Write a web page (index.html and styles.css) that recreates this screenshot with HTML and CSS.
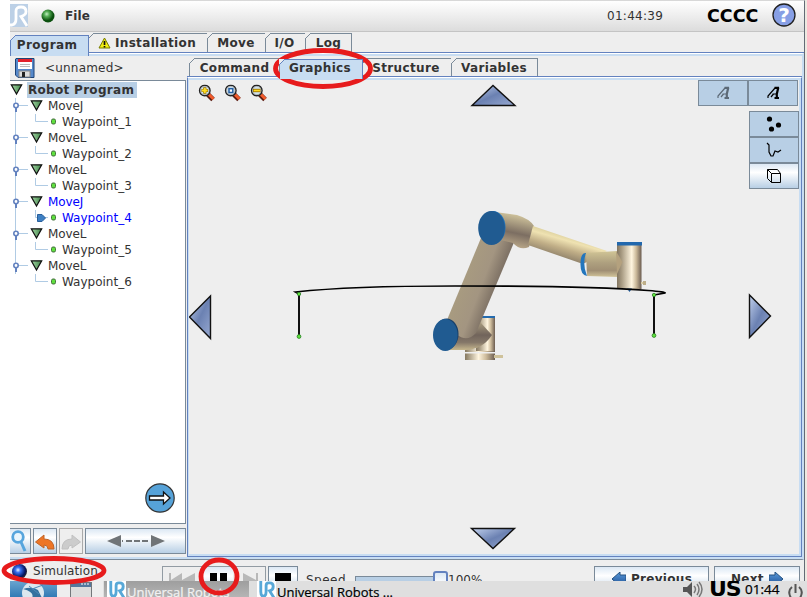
FILE: index.html
```html
<!DOCTYPE html>
<html lang="en">
<head>
<meta charset="utf-8">
<title>Universal Robots</title>
<link rel="stylesheet" href="styles.css">
</head>
<body>
<svg class="defs" width="0" height="0">
  <defs>
    <linearGradient id="green" x1="0" x2="1"><stop offset="0" stop-color="#a5d7a5"/><stop offset="1" stop-color="#3f8448"/></linearGradient>
    <linearGradient id="steel" x1="0" y1="0" x2="1" y2="1"><stop offset="0" stop-color="#c3d2ee"/><stop offset=".5" stop-color="#6b81b2"/><stop offset="1" stop-color="#98aad2"/></linearGradient>
    <linearGradient id="blueArrow" x1="0" y1="0" x2="0" y2="1"><stop offset="0" stop-color="#5b9bdc"/><stop offset="1" stop-color="#1c4f93"/></linearGradient>
    <radialGradient id="greenBall" cx=".4" cy=".35"><stop offset="0" stop-color="#c4eec4"/><stop offset=".4" stop-color="#55ad55"/><stop offset="1" stop-color="#0b500e"/></radialGradient>
    <radialGradient id="blueBall" cx=".4" cy=".4" r=".6"><stop offset="0" stop-color="#e8f0ff"/><stop offset=".3" stop-color="#376ff0"/><stop offset=".8" stop-color="#051460"/><stop offset="1" stop-color="#223"/></radialGradient>
    <symbol id="head" viewBox="0 0 36 16"><path d="M5.500 0V16M5 7.500H18" stroke="#b0cbe4" fill="none"/><path d="M6 9V14" stroke="#6382bf" stroke-width="2"/><circle cx="6" cy="7.500" r="2.200" fill="#fff" stroke="#6382bf" stroke-width="1.600"/><path d="M21.300 2.800H31.700L26.500 12Z" fill="url(#green)" stroke="#111" stroke-width="1.200"/></symbol>
    <symbol id="leaf" viewBox="0 0 50 16"><path d="M25.500 0V7.500H38" stroke="#b0cbe4" fill="none"/><rect x="41.500" y="5" width="4" height="5" rx="1.500" fill="#5fe03e" stroke="#43703b"/></symbol>
    <symbol id="lens" viewBox="0 0 18 18"><path d="M10 10L15 15" stroke="#5b1b10" stroke-width="5"/><path d="M11 10L15.500 14.500" stroke="#f25c2c" stroke-width="3"/><circle cx="6.800" cy="6" r="5.200" fill="#d1e4f1" stroke="#222" stroke-width="1.500"/><circle cx="6.800" cy="6" r="4.100" fill="none" stroke="#aaa" stroke-width=".8"/></symbol>
    <symbol id="robotmark" viewBox="0 0 13 14"><path d="M8 2L1 10V12M6.500 8L4 11M5.500 8H10" fill="none" stroke="currentColor" stroke-width="1.200"/><path d="M7.500 1.800H12M11.300 1.500L9.800 8V12" fill="none" stroke="currentColor" stroke-width="2.200"/><path d="M7.500 12H12" stroke="currentColor" stroke-width="2"/></symbol>
    <symbol id="ur" viewBox="0 0 18 20"><path d="M2 0V12Q2 17 5 17Q8 17 8 12V5Q8 2 11 2H12Q16 2 16 6Q16 10 12 11L17 19" fill="none" stroke="currentColor" stroke-width="3.200"/></symbol>
  </defs>
</svg>
<div class="screen">
  <div class="app">
    <header class="topbar">
      <svg class="logo" width="18" height="23" viewBox="0 0 18 23"><rect width="18" height="23" fill="#bcd0e6"/><path d="M0 21H2Q6 20 6 15V7Q6 3 11 3Q16 3 16 7.500Q16 11 11 12.500L17 22" fill="none" stroke="#fff" stroke-width="2.800"/></svg>
      <svg class="ball" width="14" height="14"><circle cx="7" cy="7" r="6.500" fill="url(#greenBall)"/></svg>
      <span class="file">File</span>
      <span class="clock">01:44:39</span>
      <span class="code">CCCC</span>
      <svg class="help" width="24" height="24"><circle cx="12" cy="12" r="11" fill="#879fe5" stroke="#222" stroke-width="1.300"/><text x="12" y="19" text-anchor="middle" class="question">?</text></svg>
    </header>

    <nav class="tabs main-tabs">
      <div class="tab program active">Program</div>
      <div class="tab installation"><svg width="13" height="12" viewBox="0 0 13 12"><path d="M6.500 1L12 11H1Z" fill="#f2ee13" stroke="#777c00"/><path d="M6.500 4V8M6.500 9V10.500" stroke="#111" stroke-width="1.700"/></svg>Installation</div>
      <div class="tab move">Move</div>
      <div class="tab io">I/O</div>
      <div class="tab log">Log</div>
    </nav>

    <div class="workspace">
      <section class="program-pane">
        <div class="filebar">
          <svg width="20" height="20" viewBox="0 0 20 20"><path d="M1 .500H19V19.500H3L.500 17V1Z" fill="#5689cb" stroke="#1d4376"/><rect x="3" y="1" width="14" height="10" fill="#fff"/><rect x="3" y="1" width="14" height="3" fill="#e3212c"/><path d="M5 6.500H15M5 8.500H15" stroke="#bbb"/><rect x="4" y="13" width="11" height="6" fill="#ddd" stroke="#888"/><rect x="7" y="14" width="3" height="5" fill="#222"/></svg>
          <span class="filename">&lt;unnamed&gt;</span>
        </div>
        <div class="tree">
          <div class="row root"><svg width="18" height="16"><path d="M1.300 2.800H11.700L6.500 12Z" fill="url(#green)" stroke="#111" stroke-width="1.200"/></svg><b>Robot Program</b></div>
          <div class="row"><svg width="36" height="16"><use href="#head"/></svg><span>MoveJ</span></div>
          <div class="row sub"><svg width="50" height="16"><use href="#leaf"/></svg><span>Waypoint_1</span></div>
          <div class="row"><svg width="36" height="16"><use href="#head"/></svg><span>MoveL</span></div>
          <div class="row sub"><svg width="50" height="16"><use href="#leaf"/></svg><span>Waypoint_2</span></div>
          <div class="row"><svg width="36" height="16"><use href="#head"/></svg><span>MoveL</span></div>
          <div class="row sub"><svg width="50" height="16"><use href="#leaf"/></svg><span>Waypoint_3</span></div>
          <div class="row current"><svg width="36" height="16"><use href="#head"/></svg><span>MoveJ</span></div>
          <div class="row sub current"><svg width="50" height="16"><use href="#leaf"/><path d="M27.500 4.500H32L35.500 8L32 11.500H27.500Z" fill="#3e80c3" stroke="#295f9b"/></svg><span>Waypoint_4</span></div>
          <div class="row"><svg width="36" height="16"><use href="#head"/></svg><span>MoveL</span></div>
          <div class="row sub"><svg width="50" height="16"><use href="#leaf"/></svg><span>Waypoint_5</span></div>
          <div class="row"><svg width="36" height="16"><use href="#head"/></svg><span>MoveL</span></div>
          <div class="row sub last"><svg width="50" height="16"><use href="#leaf"/></svg><span>Waypoint_6</span></div>
          <svg class="go" width="30" height="30"><circle cx="15" cy="15" r="14.200" fill="#56a2d8" stroke="#333" stroke-width="1.200"/><path d="M4.500 13H18.500V9L25 15L18.500 21V17H4.500Z" fill="#fff" stroke="#111" stroke-width="1.300"/></svg>
        </div>
        <div class="tools">
          <div class="btn search"><svg width="20" height="24"><circle cx="8" cy="8" r="5.300" fill="#e9f5fd" stroke="#57a5dd" stroke-width="2.800"/><path d="M11 13L15 22" stroke="#57a5dd" stroke-width="3"/></svg></div>
          <div class="btn"><svg width="22" height="24"><path d="M1.500 13L10 6V10Q20 10 20 20H14Q14 16 10 16V19Z" fill="#ee7525" stroke="#bf6428"/></svg></div>
          <div class="btn off"><svg width="22" height="24"><path d="M20.500 13L12 6V10Q2 10 2 20H8Q8 16 12 16V19Z" fill="#ccc" stroke="#c0c0c0"/></svg></div>
          <div class="btn wide"><svg width="60" height="14"><path d="M1 7L15 1V13ZM59 7L45 1V13Z" fill="#707477"/><path d="M16 7H45" stroke="#707477" stroke-width="2" stroke-dasharray="1 3 6 2 6 2 6 3"/></svg></div>
        </div>
      </section>

      <section class="view-pane">
        <nav class="tabs view-tabs">
          <div class="tab command">Command</div>
          <div class="tab graphics active">Graphics</div>
          <div class="tab structure">Structure</div>
          <div class="tab variables">Variables</div>
        </nav>
        <div class="canvas">
          <svg class="scene" width="612" height="476" viewBox="187 78 612 476">
            <defs>
              <linearGradient id="upper" gradientUnits="userSpaceOnUse" x1="463" y1="278" x2="500" y2="292"><stop offset="0" stop-color="#a89b80"/><stop offset=".5" stop-color="#a39581"/><stop offset="1" stop-color="#70645a"/></linearGradient>
              <linearGradient id="fore" gradientUnits="userSpaceOnUse" x1="572" y1="233" x2="564" y2="261"><stop offset="0" stop-color="#cfc390"/><stop offset=".3" stop-color="#efe2b2"/><stop offset=".6" stop-color="#c0ae87"/><stop offset="1" stop-color="#867965"/></linearGradient>
              <linearGradient id="elbow" gradientUnits="userSpaceOnUse" x1="518" y1="213" x2="511" y2="246"><stop offset="0" stop-color="#d7cba1"/><stop offset=".6" stop-color="#7c6e62"/><stop offset="1" stop-color="#b7a587"/></linearGradient>
              <linearGradient id="wrist" x1="0" y1="0" x2="0" y2="1"><stop offset="0" stop-color="#d1c596"/><stop offset=".45" stop-color="#aea07f"/><stop offset=".75" stop-color="#a08f74"/><stop offset="1" stop-color="#d2c49a"/></linearGradient>
              <linearGradient id="shoulder" x1="0" y1="0" x2="0" y2="1"><stop offset="0" stop-color="#b3a685"/><stop offset=".5" stop-color="#71645b"/><stop offset=".75" stop-color="#857869"/><stop offset="1" stop-color="#c6b78e"/></linearGradient>
              <linearGradient id="tube" x1="0" x2="1"><stop offset="0" stop-color="#827560"/><stop offset=".2" stop-color="#aa9d84"/><stop offset=".6" stop-color="#fff5df"/><stop offset=".78" stop-color="#cdbb9b"/><stop offset="1" stop-color="#6b5c50"/></linearGradient>
              <linearGradient id="base" x1="0" x2="1"><stop offset="0" stop-color="#85785f"/><stop offset=".45" stop-color="#fff5df"/><stop offset=".7" stop-color="#cdbb9b"/><stop offset="1" stop-color="#6b5c50"/></linearGradient>
            </defs>
            <g class="zoom-tools">
              <use href="#lens" x="198" y="84.500" width="18" height="18"/><path d="M201.500 90.500H208M204.800 87.300V93.700" stroke="#987400" stroke-width="3.200"/><path d="M202 90.500H207.500M204.800 88V93" stroke="#ffdd22" stroke-width="1.900"/>
              <use href="#lens" x="224" y="84.500" width="18" height="18"/><rect x="229" y="88.700" width="3.800" height="3.800" fill="#fff" stroke="#245fa4" stroke-width="1.500"/>
              <use href="#lens" x="250" y="84.500" width="18" height="18"/><path d="M253 90.500H260.500" stroke="#9d7600" stroke-width="3.400"/><path d="M253.700 90.500H260" stroke="#ffdb20" stroke-width="1.600"/>
            </g>
            <g fill="url(#steel)" stroke="#111" stroke-width="1.400">
              <path d="M472 105.500L493 85.500L515 105.500Z"/><path d="M471.500 528.500H514.500L493 548.500Z"/><path d="M189.500 317L210.500 296V338.500Z"/><path d="M749.500 295V337.500L770.500 316Z"/>
            </g>
            <rect x="465" y="349" width="30" height="3" fill="url(#base)"/><rect x="476" y="316" width="19" height="35" fill="url(#tube)"/><path d="M481 317H495" stroke="#246baf" stroke-width="2"/>
            <path d="M448 320L480 322L492 335Q482 350 465 350H446Z" fill="url(#shoulder)"/>
            <rect x="465" y="353.500" width="30" height="6.500" fill="url(#base)"/><path d="M494 356.500H503" stroke="#cfc29b" stroke-width="3"/>
            <path d="M447 320L481 238L500 228L515 240L476 333Q467 343 456 334Z" fill="url(#upper)"/>
            <path d="M495 212L517 215Q530 219 534 226L529 247Q520 251 513 243L492 238Z" fill="url(#elbow)"/>
            <path d="M533 226L607 251L583 264L528 245Z" fill="url(#fore)"/>
            <path d="M586 253L617 251L623 263L617 277L587 276Z" fill="url(#wrist)"/>
            <path d="M586 253Q581 252 580.500 263Q580 275 587 276Q582 264 586 253" fill="#2376bd"/>
            <rect x="617" y="244" width="24.500" height="45" fill="url(#tube)"/>
            <path d="M616 251L622.500 262L617 274Z" fill="#b4a17e"/><rect x="617" y="242" width="25" height="3.500" fill="#2268ad"/>
            <rect x="641" y="282" width="3" height="2" fill="#d8cca5"/><rect x="643" y="281" width="3" height="4" fill="#bdae89"/>
            <ellipse cx="493" cy="227.500" rx="12.500" ry="16.500" fill="#1d71bb"/><ellipse cx="491.500" cy="228" rx="13.300" ry="17" fill="#205b91"/>
            <ellipse cx="446.500" cy="334" rx="12" ry="15.500" fill="#173f69"/><ellipse cx="445.300" cy="335" rx="12.300" ry="16" fill="#205b91"/>
            <path d="M627 288.500H632L629.500 292Z" fill="#225e9e"/>
            <path d="M299 294L295.500 292Q350 286 455 286Q590 286 648 290.500Q666 292 665 293L654 295" fill="none" stroke="#000" stroke-width="1.700"/>
            <path d="M299 294V336M654 295V336" stroke="#111" stroke-width="2"/>
            <g fill="#62e33e" stroke="#257c22" stroke-width=".8"><circle cx="299" cy="294" r="1.700"/><circle cx="299" cy="336.500" r="1.900"/><circle cx="654" cy="295" r="1.700"/><circle cx="654" cy="335.500" r="1.900"/></g>
          </svg>
          <div class="view-controls">
            <div class="pair"><div class="toggle dim"><svg width="13" height="14"><use href="#robotmark"/></svg></div><div class="toggle"><svg width="13" height="14"><use href="#robotmark"/></svg></div></div>
            <div class="stack">
              <div class="toggle"><svg width="18" height="18"><circle cx="4.500" cy="4" r="2.600"/><circle cx="13.500" cy="10" r="2.600"/><circle cx="6.500" cy="14" r="2.600"/></svg></div>
              <div class="toggle"><svg width="16" height="16"><path d="M1 1L3 3V10L5 14H7L9 9L12 10L15 8" fill="none" stroke="#000" stroke-width="1.200"/></svg></div>
              <div class="toggle light"><svg width="16" height="16"><path d="M1.500 1.500H11.500L14.500 5.500V14.500H5.500L1.500 10.500ZM1.500 1.500L5.500 5.500H14.500M5.500 5.500V14.500" fill="none" stroke="#000"/></svg></div>
            </div>
          </div>
        </div>
      </section>
    </div>

    <footer class="runbar">
      <div class="mode"><svg width="17" height="17"><circle cx="8.500" cy="8.500" r="7.500" fill="url(#blueBall)"/></svg><span>Simulation</span></div>
      <div class="transport">
        <svg width="40" height="24"><path d="M6 6H8V13L19 6V13L32 6V18H6Z" fill="#b8b8b8"/></svg>
        <div class="pause"><i></i><i></i></div>
        <svg width="32" height="24"><path d="M10 6L23 13V6H25V18H10Z" fill="#b8b8b8"/></svg>
      </div>
      <div class="stop"><i></i></div>
      <span class="speed">Speed</span>
      <div class="slider"><div class="thumb"></div></div>
      <span class="percent">100%</span>
      <div class="nav previous"><svg width="14" height="14"><path d="M0 7L8 0V3H14V11H8V14Z" fill="url(#blueArrow)" stroke="#245080"/></svg><b>Previous</b></div>
      <div class="nav next"><b>Next</b><svg width="14" height="14"><path d="M14 7L6 0V3H0V11H6V14Z" fill="url(#blueArrow)" stroke="#245080"/></svg></div>
    </footer>
  </div>

  <div class="taskbar">
    <div class="start"><svg width="23" height="17"><circle cx="11" cy="12" r="11" fill="#dbe8ef"/><path d="M1 8Q10 5 16 9L20 17H10Q13 11 1 8Z" fill="#34719f"/><path d="M10 8L21 4M7 5L17 13" stroke="#4d89b8"/></svg></div>
    <svg class="window-icon" width="22" height="16"><rect x=".500" y=".500" width="21" height="18" fill="#ddd" stroke="#73777a"/><path d="M1 3H21" stroke="#54789d" stroke-width="4"/><path d="M11 2H19" stroke="#fff" stroke-dasharray="2 1"/></svg>
    <div class="task inactive"><div class="mark"><svg width="16" height="18"><use href="#ur"/></svg></div><span>Universal Robots</span></div>
    <div class="task"><div class="mark"><svg width="16" height="18"><use href="#ur"/></svg></div><span>Universal Robots ...</span></div>
    <svg class="volume" width="21" height="17"><path d="M0 6H4L9 1V16L4 11H0Z" fill="#555"/><path d="M11 5Q14 8 11 12M14 3Q18 8 14 14M16 1Q22 8 16 16" fill="none" stroke="#777" stroke-width="1.500"/></svg>
    <span class="locale">US</span>
    <span class="time">01:44</span>
    <svg class="power" width="15" height="16"><path d="M4 4Q-1 8 3 15M11 4Q16 8 12 15M7.500 1V10" fill="none" stroke="#555" stroke-width="2"/></svg>
  </div>

  <svg class="marks" width="807" height="597" fill="none" stroke="#e71b1c">
    <ellipse cx="323" cy="68.500" rx="47.500" ry="18" stroke-width="4.800"/>
    <ellipse cx="54" cy="570.500" rx="50" ry="12" stroke-width="4.800"/>
    <ellipse cx="219" cy="576.500" rx="18" ry="16.500" stroke-width="4.800"/>
  </svg>
</div>
</body>
</html>
```
FILE: styles.css
```css
* { box-sizing: border-box; }
body { margin: 0; background: #fff; font: 12px "DejaVu Sans", sans-serif; color: #333; }
svg { display: block; flex: none; }
.defs { position: absolute; }
.screen { position: relative; width: 807px; height: 597px; overflow: hidden; padding-left: 10px; background: linear-gradient(90deg, #fff 10px, #ede9e1 10px); }
.app { width: 795px; height: 581px; overflow: hidden; background: #eee; border-top: 1px solid #d8d8d8; border-right: 1px solid #626b75; display: flex; flex-direction: column; }

.topbar { height: 31px; flex: none; display: flex; align-items: center; background: linear-gradient(#fff, #dcdcdc); border-bottom: 1px solid #c4c4c4; }
.logo { margin-top: -1px; }
.ball { margin-left: 13px; }
.file { margin-left: 10px; font-weight: bold; letter-spacing: .1px; }
.clock { margin-left: auto; width: 56px; letter-spacing: .28px; }
.code { margin-left: 44px; width: 52px; font: bold 17.500px "DejaVu Sans", sans-serif; color: #000; letter-spacing: 0; }
.help { margin-left: 13px; margin-right: 8px; margin-top: -2px; }
.question { font: bold 20px "DejaVu Sans", sans-serif; fill: #fff; }

.tabs { display: flex; align-items: flex-end; border-bottom: 1px solid #6382bf; flex: none; }
.tab { position: relative; height: 19px; border: 1px solid #7a8a99; border-bottom: 0; border-left-width: 0; display: flex; align-items: center; justify-content: center; font-weight: bold; letter-spacing: .35px; background: #eee; white-space: nowrap; }
.tab:first-child { border-left-width: 1px; }
.tab::before { content: ""; position: absolute; left: -1px; top: -1px; width: 6px; height: 6px; background: linear-gradient(135deg, #eee 0 3.700px, #7a8a99 3.700px 4.700px, #eee 4.700px); }
.tab.active { background: #c8ddf2; border-color: #6382bf; }
.tab.active::before { background: linear-gradient(135deg, #eee 0 3.700px, #6382bf 3.700px 4.700px, #c8ddf2 4.700px); }
.main-tabs { height: 21px; }
.program { width: 79px; height: 21px; margin-bottom: -4px; z-index: 1; padding: 0 5px 2px 0; }
.installation { width: 119px; gap: 4px; padding-right: 2px; }
.move { width: 58px; padding-right: 1px; }
.io { width: 40px; padding-right: 2px; }
.log { width: 46px; }

.workspace { height: 507px; flex: none; display: flex; border-top: 1px solid #fff; border-right: 2px solid #c8ddf2; border-bottom: 1px solid #7a8a99; background: linear-gradient(#c8ddf2 2px, transparent 2px, transparent 503px, #c8ddf2 503px); }
.program-pane { width: 176px; padding-top: 2px; }
.filebar { height: 24px; display: flex; align-items: center; padding-left: 5px; }
.filename { margin-left: 10px; letter-spacing: .2px; }
.tree { position: relative; height: 444px; background: #fff; border: 1px solid #7a8a99; border-left: 0; padding-top: 1px; }
.row { height: 16px; display: flex; align-items: center; line-height: 16px; }
.root b { background: #b8cfe5; padding: 0 3px 0 1px; margin-left: -1px; letter-spacing: .3px; width: 110px; white-space: nowrap; }
.row span { margin-left: 2px; }
.row:not(.sub):not(.root) span { letter-spacing: -.1px; }
.sub { background: linear-gradient(#b0cbe4, #b0cbe4) 5px 0 / 1px 16px no-repeat; }
.sub.last { background: none; }
.current { color: #00f; }
.go { position: absolute; right: 10px; bottom: 10px; }
.tools { height: 26px; margin-top: 4px; display: flex; gap: 2px; }
.btn, .nav, .toggle.light { background: linear-gradient(#dce8f4, #fff 35%, #b8cfe5); border: 1px solid #7a8a99; }
.btn { width: 24px; display: flex; align-items: center; justify-content: center; overflow: hidden; }
.search { width: 21px; border-left: 0; }
.off { background: #eee; border-color: #aaa; }
.wide { width: 101px; }

.view-pane { width: 616px; padding-top: 4px; margin-left: 1px; }
.view-tabs { height: 19px; padding-left: 2px; width: 615px; }
.view-tabs .tab { height: 18px; }
.command { width: 91px; }
.view-tabs .graphics { width: 83px; height: 20px; margin-bottom: -3px; border-top-color: #6382bf; padding: 0 2px 3px 0; z-index: 1; }
.structure { width: 89px; padding-right: 2px; }
.variables { width: 86px; padding-right: 1px; }
.canvas { position: relative; width: 615px; height: 480px; border: 1px solid #6382bf; border-top-color: #fff; background: linear-gradient(#c8ddf2 2px, transparent 2px, transparent 476px, #c8ddf2 476px); overflow: hidden; }
.canvas::after { content: ""; position: absolute; inset: 0; border-left: 1px solid #c8ddf2; border-right: 2px solid #c8ddf2; pointer-events: none; }
.scene { margin-left: -1px; }
.view-controls { position: absolute; right: 2px; top: 2px; display: flex; flex-direction: column; align-items: flex-end; gap: 5px; }
.pair { display: flex; margin-right: 1px; }
.toggle { width: 50px; height: 26px; background: #b8cfe5; border: 1px solid #7a8a99; display: flex; align-items: center; justify-content: center; color: #000; }
.dim { color: #5c6976; }

.runbar { height: 21px; flex: none; display: flex; align-items: flex-start; padding-top: 6px; }
.mode { width: 152px; display: flex; align-items: center; height: 18px; gap: 5px; margin-top: -4px; padding-left: 1px; letter-spacing: .1px; }
.transport { display: flex; width: 104px; height: 26px; border: 1px solid #929ba3; margin-right: 2px; }
.pause, .stop { width: 30px; height: 26px; display: flex; justify-content: center; gap: 3px; padding-top: 6px; background: linear-gradient(#dce8f4, #fff 35%, #b8cfe5); }
.pause i { width: 7px; height: 12px; background: #000; }
.stop { border: 1px solid #7a8a99; padding-top: 6px; }
.stop i { width: 16px; height: 16px; background: #000; }
.speed { margin: 7px 0 0 8px; width: 49px; letter-spacing: .5px; }
.slider { margin-top: 10px; width: 92px; height: 8px; border: 1px solid #7a8a99; background: #b8cfe5; flex: none; }
.thumb { width: 15px; height: 15px; border: 2px solid #6382bf; border-radius: 3px; background: linear-gradient(#dce8f4, #fff); margin: -6px 0 0 77px; }
.percent { margin: 7px 0 0 1px; }
.nav { height: 27px; display: flex; align-items: flex-start; gap: 5px; padding-top: 5px; letter-spacing: .3px; }
.previous { width: 115px; margin-left: auto; padding-left: 17px; }
.next { width: 86px; margin: 0 4px 0 5px; padding-left: 16px; }

.taskbar { height: 16px; width: 797px; display: flex; background: linear-gradient(90deg, #eee 93px, #dfdfdf 93px); font: 13px "Open Sans", "Noto Sans", sans-serif; white-space: nowrap; overflow: hidden; }
.start { width: 47px; background: linear-gradient(#6aa4cf, #327bb5); display: flex; justify-content: center; }
.window-icon { margin: 1px 12px 0 13px; }
.task { display: flex; height: 24px; width: 150px; padding-left: 8px; color: #000; line-height: 22px; -webkit-text-stroke: .2px; }
.task.inactive { width: 145px; padding-left: 3px; background: linear-gradient(#9e9e9e, #c0c0c0); color: #f2f2f2; }
.mark { width: 19px; background: #fff; color: #58a8d7; padding-left: 2px; margin-right: 1px; }
.volume { margin-left: auto; }
.locale { width: 36px; margin-left: 5px; font: bold 22px/16px "DejaVu Sans", sans-serif; color: #000; letter-spacing: -1px; }
.time { margin-left: 0; width: 40px; color: #000; line-height: 16px; font-size: 13.500px; -webkit-text-stroke: .25px; }
.power { margin: 2px 4px 0 3px; }
.marks { position: absolute; left: 0; top: 0; pointer-events: none; }
```
